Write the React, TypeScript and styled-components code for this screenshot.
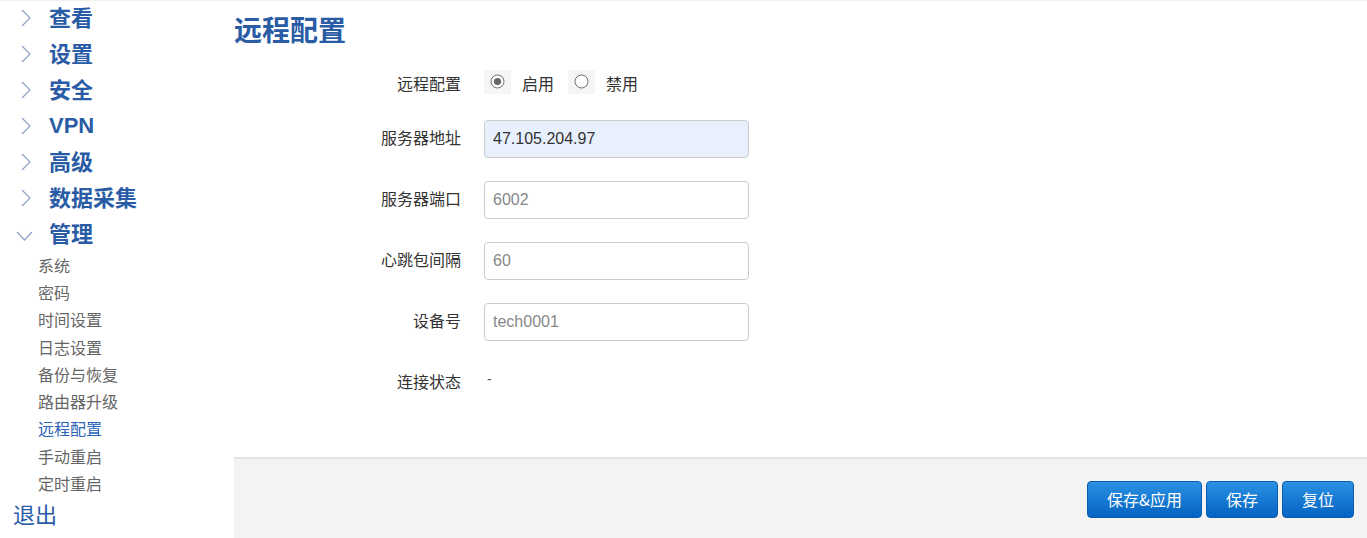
import React, { useState } from "react";
import styled, { createGlobalStyle } from "styled-components";

const GlobalStyle = createGlobalStyle`
  html, body {
    margin: 0;
    padding: 0;
    background: #fff;
    font-family: "Liberation Sans", "Noto Sans CJK SC", sans-serif;
  }
  * { box-sizing: border-box; }
`;

const Page = styled.div`
  display: flex;
  width: 1367px;
  height: 538px;
  border-top: 1px solid #f0f0f0;
  overflow: hidden;
`;

const Sidebar = styled.nav`
  width: 234px;
  flex-shrink: 0;
  display: flex;
  flex-direction: column;
  margin-top: -1px;
`;

const MenuItem = styled.div`
  height: 36px;
  display: flex;
  align-items: center;
  color: #2a5ca6;
  font-family: "Liberation Sans", "Noto Sans CJK SC", sans-serif;
  font-size: 22px;
  font-weight: 700;
  cursor: pointer;
`;

const MenuText = styled.span<{ $latin?: boolean }>`
  position: relative;
  top: ${(p) => (p.$latin ? "0" : "-2px")};
`;

const Chevron = styled.span<{ $open?: boolean }>`
  width: 49px;
  display: flex;
  align-items: center;
  padding-left: ${(p) => (p.$open ? "16px" : "21px")};
  padding-top: ${(p) => (p.$open ? "4px" : "0")};
`;

const SubItem = styled.div<{ $active?: boolean }>`
  height: 27.3px;
  display: flex;
  align-items: center;
  padding-left: 38px;
  padding-bottom: 2px;
  font-family: "Noto Sans CJK SC", sans-serif;
  font-size: 16px;
  color: ${(p) => (p.$active ? "#2b63b8" : "#666")};
  cursor: pointer;
`;

const Logout = styled.div`
  height: 36px;
  display: flex;
  align-items: center;
  padding-left: 13px;
  padding-bottom: 5px;
  font-family: "Noto Sans CJK SC", sans-serif;
  font-size: 22px;
  color: #2a5ca6;
`;

const Main = styled.main`
  flex: 1;
  display: flex;
  flex-direction: column;
`;

const Title = styled.h2`
  margin: 0;
  height: 60px;
  padding: 8px 0 0 0;
  line-height: 40px;
  font-family: "Noto Sans CJK SC", sans-serif;
  font-size: 28px;
  font-weight: 700;
  color: #2a5ca6;
`;

const Row = styled.div<{ $h: number }>`
  height: ${(p) => p.$h}px;
  display: flex;
  align-items: center;
`;

const Label = styled.label`
  width: 227px;
  text-align: right;
  padding-bottom: 3px;
  font-family: "Noto Sans CJK SC", sans-serif;
  font-size: 16px;
  color: #333;
  flex-shrink: 0;
`;

const Field = styled.div`
  margin-left: 23px;
  display: flex;
  align-items: center;
`;

const Input = styled.input<{ $filled?: boolean }>`
  width: 265px;
  height: 38px;
  padding: 0 8px;
  border: 1px solid #ccc;
  border-radius: 4px;
  font-family: "Liberation Sans", Arial, sans-serif;
  font-size: 16px;
  color: ${(p) => (p.$filled ? "#333" : "#888")};
  background: ${(p) => (p.$filled ? "#e8f0fe" : "#fff")};
  outline: none;
`;

const RadioBox = styled.span`
  width: 27px;
  height: 24px;
  display: flex;
  align-items: center;
  justify-content: center;
  background: #f5f5f5;
  margin-top: -6px;
`;

const RadioText = styled.span<{ $gap: number }>`
  margin-left: 11px;
  margin-right: ${(p) => p.$gap}px;
  padding-bottom: 3px;
  font-family: "Noto Sans CJK SC", sans-serif;
  font-size: 16px;
  color: #333;
`;

const StatusValue = styled.span`
  margin-left: 3px;
  margin-top: -8px;
  font-size: 14px;
  color: #555;
`;

const Spacer = styled.div`
  height: 44px;
`;

const Footer = styled.div`
  flex: 1;
  background: #f3f3f3;
  border-top: 2px solid #e4e4e4;
  display: flex;
  justify-content: flex-end;
  align-items: flex-start;
  gap: 4px;
  padding: 22px 13px 0 0;
`;

const Button = styled.button`
  height: 37px;
  padding: 0 19px 2px;
  border: 1px solid #0b5cae;
  border-radius: 4px;
  background: linear-gradient(#2b91e3, #0463c2);
  color: #fff;
  font-family: "Noto Sans CJK SC", sans-serif;
  font-size: 16px;
  cursor: pointer;
`;

const Radio = ({ checked }: { checked: boolean }) => (
  <RadioBox>
    <svg width="15" height="15" viewBox="0 0 15 15">
      <circle cx="7.5" cy="7.5" r="6.5" fill="#fff" stroke="#6f6f6f" strokeWidth="1" />
      {checked && <circle cx="7.5" cy="7.5" r="3.6" fill="#666" />}
    </svg>
  </RadioBox>
);

const Arrow = ({ open }: { open?: boolean }) => (
  <Chevron $open={open}>
    {open ? (
      <svg width="17" height="10" viewBox="0 0 17 10">
        <polyline points="1,1 8.5,9 16,1" fill="none" stroke="#8ea3c4" strokeWidth="1.2" />
      </svg>
    ) : (
      <svg width="10" height="18" viewBox="0 0 10 18">
        <polyline points="1,1 9,9 1,17" fill="none" stroke="#8ea3c4" strokeWidth="1.2" />
      </svg>
    )}
  </Chevron>
);

const menus = ["查看", "设置", "安全", "VPN", "高级", "数据采集"];
const subs = ["系统", "密码", "时间设置", "日志设置", "备份与恢复", "路由器升级", "远程配置", "手动重启", "定时重启"];

const fields = [
  { label: "服务器地址", value: "47.105.204.97", filled: true },
  { label: "服务器端口", value: "6002" },
  { label: "心跳包间隔", value: "60" },
  { label: "设备号", value: "tech0001" },
];

export default function App() {
  const [enabled, setEnabled] = useState(true);

  return (
    <Page>
      <GlobalStyle />
      <Sidebar>
        {menus.map((m) => (
          <MenuItem key={m}>
            <Arrow />
            <MenuText $latin={m === "VPN"}>{m}</MenuText>
          </MenuItem>
        ))}
        <MenuItem>
          <Arrow open />
          <MenuText>管理</MenuText>
        </MenuItem>
        {subs.map((s) => (
          <SubItem key={s} $active={s === "远程配置"}>
            {s}
          </SubItem>
        ))}
        <Logout>退出</Logout>
      </Sidebar>
      <Main>
        <Title>远程配置</Title>
        <Row $h={47}>
          <Label>远程配置</Label>
          <Field onClick={() => setEnabled(!enabled)}>
            <Radio checked={enabled} />
            <RadioText $gap={14}>启用</RadioText>
            <Radio checked={!enabled} />
            <RadioText $gap={0}>禁用</RadioText>
          </Field>
        </Row>
        {fields.map((f) => (
          <Row $h={61} key={f.label}>
            <Label>{f.label}</Label>
            <Field>
              <Input defaultValue={f.value} $filled={f.filled} />
            </Field>
          </Row>
        ))}
        <Row $h={61}>
          <Label>连接状态</Label>
          <Field>
            <StatusValue>-</StatusValue>
          </Field>
        </Row>
        <Spacer />
        <Footer>
          <Button>保存&amp;应用</Button>
          <Button>保存</Button>
          <Button>复位</Button>
        </Footer>
      </Main>
    </Page>
  );
}
